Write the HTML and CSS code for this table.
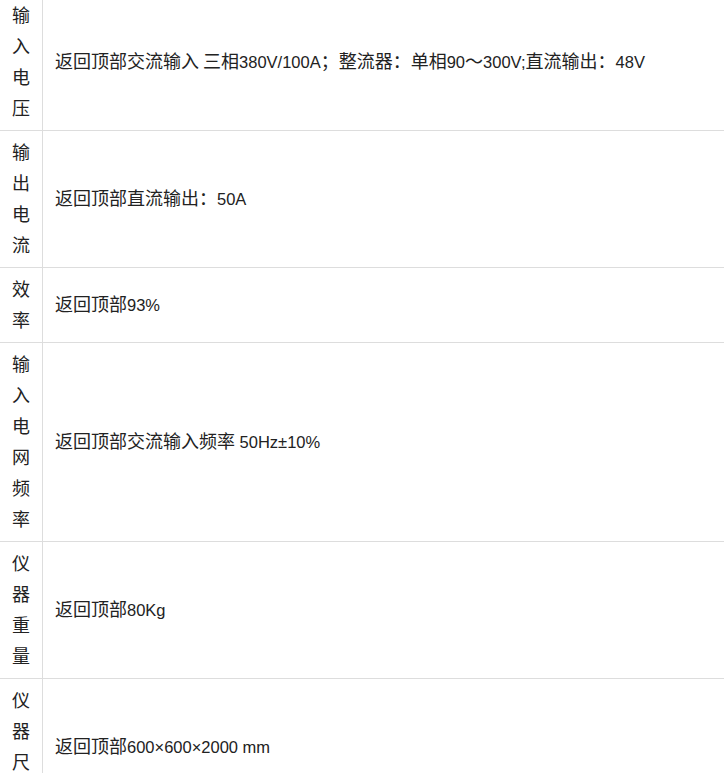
FILE: index.html
```html
<!DOCTYPE html>
<html lang="zh-CN">
<head>
    <meta charset="UTF-8">
    <meta name="viewport" content="width=device-width, initial-scale=1.0">
    <title>技术参数</title>
    <link rel="stylesheet" href="styles.css">
</head>
<body>
    <table class="spec-table">
        <tr>
            <td class="spec-name">输入电压</td>
            <td class="spec-value">返回顶部交流输入 三相<span class="num">380V/100A</span>；整流器：单相<span class="num">90</span>～<span class="num">300V;</span>直流输出：<span class="num">48V</span></td>
        </tr>
        <tr>
            <td class="spec-name">输出电流</td>
            <td class="spec-value">返回顶部直流输出：<span class="num">50A</span></td>
        </tr>
        <tr>
            <td class="spec-name">效率</td>
            <td class="spec-value">返回顶部<span class="num">93%</span></td>
        </tr>
        <tr>
            <td class="spec-name">输入电网频率</td>
            <td class="spec-value">返回顶部交流输入频率<span class="num"> 50Hz±10%</span></td>
        </tr>
        <tr>
            <td class="spec-name">仪器重量</td>
            <td class="spec-value">返回顶部<span class="num">80Kg</span></td>
        </tr>
        <tr>
            <td class="spec-name">仪器尺寸</td>
            <td class="spec-value">返回顶部<span class="num">600×600×2000 mm</span></td>
        </tr>
    </table>
</body>
</html>
```

FILE: styles.css
```css
body {
    margin: 0;
    padding: 0;
    background: #fff;
    font-family: "Noto Sans CJK SC", "Liberation Sans", sans-serif;
    font-size: 18px;
    color: #222;
}
.spec-table {
    width: 100%;
    margin-top: -6px;
    border-collapse: collapse;
}
.spec-table td {
    padding: 5px 12px 7px;
    line-height: 31px;
    vertical-align: middle;
    border-bottom: 1px solid #ddd;
}
.spec-name {
    width: 18px;
    text-align: center;
    border-right: 1px solid #ddd;
}
.spec-value {
    text-align: left;
    padding-left: 13px;
}
/* numbers and units use a latin face */
.num {
    font-family: "Liberation Sans", Arial, sans-serif;
    font-size: 16.5px;
}
```
